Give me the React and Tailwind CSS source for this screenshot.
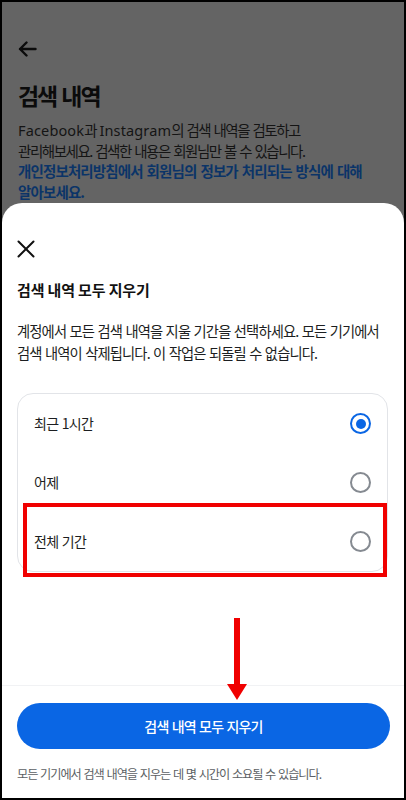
import { useState } from 'react';

const options = [
  { id: '1h', label: '최근 1시간' },
  { id: 'yesterday', label: '어제' },
  { id: 'all', label: '전체 기간' },
];

function Radio({ checked }) {
  if (checked) {
    return (
      <span className="w-[21px] h-[21px] rounded-full border-[2.5px] border-[#0a66e4] flex items-center justify-center">
        <span className="w-[10px] h-[10px] rounded-full bg-[#0a66e4]" />
      </span>
    );
  }
  return <span className="w-[21px] h-[21px] rounded-full border-2 border-[#858a91]" />;
}

export default function App() {
  const [selected, setSelected] = useState('1h');

  return (
    <div className="relative w-[406px] h-[800px] border-2 border-black bg-[#646464] flex flex-col overflow-hidden font-['Noto_Sans_CJK_KR','Noto_Sans',sans-serif]">
      {/* dimmed page behind the sheet */}
      <div className="h-[201px] shrink-0 pl-4 pr-3 pt-[39px] overflow-hidden">
        <svg width="19" height="16" viewBox="0 0 19 16" fill="none" stroke="#0b0b0b" strokeWidth="2.4" strokeLinecap="round" strokeLinejoin="round">
          <path d="M17.5 8H2M8.5 1.5L2 8l6.5 6.5" />
        </svg>
        <h1 className="mt-[23px] text-[23px] leading-[30px] font-bold text-[#0b0b0b] tracking-[-0.09em] [word-spacing:2px]">검색 내역</h1>
        <p className="mt-[10px] text-[14.5px] leading-[20.5px] text-[#141414] tracking-[-0.1em] [word-spacing:1.5px] whitespace-nowrap">
          <span className="font-['Noto_Sans',sans-serif] tracking-[0.01em]">Facebook</span>과{' '}
          <span className="font-['Noto_Sans',sans-serif] tracking-[0.01em]">Instagram</span>의 검색 내역을 검토하고<br />
          관리해보세요. 검색한 내용은 회원님만 볼 수 있습니다.<br />
          <span className="font-bold text-[#0b3468] tracking-[-0.06em]">개인정보처리방침에서 회원님의 정보가 처리되는 방식에 대해<br />알아보세요.</span>
        </p>
      </div>

      {/* bottom sheet */}
      <div className="flex-1 bg-white rounded-t-[20px] flex flex-col">
        <div className="pl-[15px] pr-4 pt-[37px]">
          <button className="block">
            <svg width="18" height="18" viewBox="0 0 18 18" fill="none" stroke="#111" strokeWidth="2" strokeLinecap="round">
              <path d="M1.5 1.5l15 15M16.5 1.5l-15 15" />
            </svg>
          </button>
          <h2 className="mt-[21px] text-[15px] leading-[22px] font-bold text-[#111] tracking-[-0.01em]">검색 내역 모두 지우기</h2>
          <p className="mt-[19px] text-[14.3px] leading-[22px] text-[#1c1e21] tracking-[-0.06em] [word-spacing:1px] whitespace-nowrap">
            계정에서 모든 검색 내역을 지울 기간을 선택하세요. 모든 기기에서<br />
            검색 내역이 삭제됩니다. 이 작업은 되돌릴 수 없습니다.
          </p>

          <div className="mt-[29px] border border-[#e2e4e8] rounded-[16px]">
            {options.map((o) => (
              <button
                key={o.id}
                onClick={() => setSelected(o.id)}
                className="w-full h-[59px] pl-4 pr-[16px] flex items-center justify-between"
              >
                <span className="text-[14px] text-[#1c1e21] tracking-[-0.05em] [word-spacing:1px]">{o.label}</span>
                <Radio checked={selected === o.id} />
              </button>
            ))}
          </div>
        </div>

        <div className="flex-1" />

        <div className="border-t border-[#f1f2f4] pt-[17px] pb-4 pl-[15px] pr-[14px]">
          <button className="w-full h-[46px] rounded-full bg-[#0a66e4] text-white text-[14px] font-medium tracking-[-0.06em] [word-spacing:1px]">
            검색 내역 모두 지우기
          </button>
          <p className="mt-[17px] text-[12.2px] leading-4 text-[#5c5f64] tracking-[-0.085em] [word-spacing:1px] whitespace-nowrap">
            모든 기기에서 검색 내역을 지우는 데 몇 시간이 소요될 수 있습니다.
          </p>
        </div>
      </div>

      {/* red annotation: box */}
      <div className="absolute left-[21px] top-[501px] w-[364px] h-[74px] border-4 border-[#f00000] pointer-events-none" />
      {/* red annotation: arrow */}
      <svg className="absolute left-[224px] top-[616px] pointer-events-none" width="22" height="82" viewBox="0 0 22 82">
        <rect x="8" y="0" width="6" height="70" fill="#f00000" />
        <polygon points="1,66 21,66 11,82" fill="#f00000" />
      </svg>
    </div>
  );
}
